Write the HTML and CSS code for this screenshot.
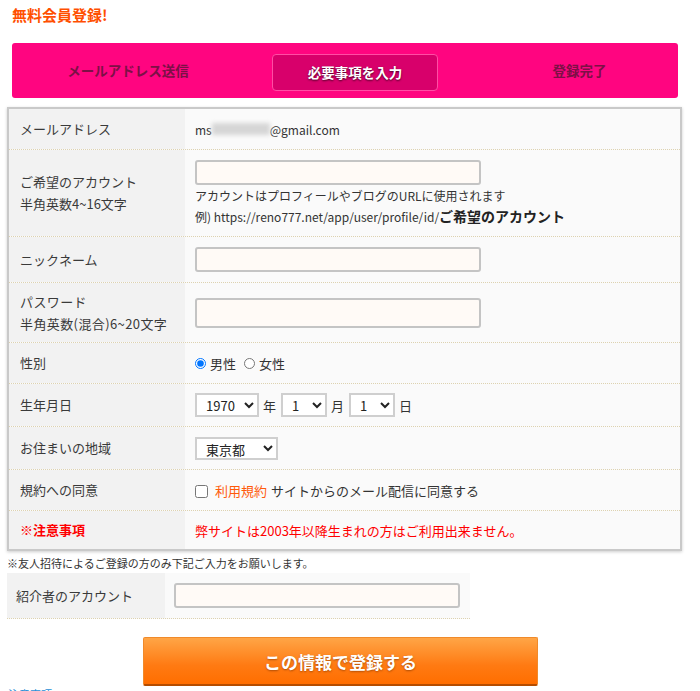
FILE: index.html
```html
<!DOCTYPE html>
<html lang="ja">
<head>
    <meta charset="UTF-8">
    <meta name="viewport" content="width=device-width, initial-scale=1.0">
    <title>無料会員登録</title>
    <link rel="stylesheet" href="styles.css">
</head>
<body>
    <h1 class="page-title">無料会員登録!</h1>

    <div class="steps">
        <div class="step">メールアドレス送信</div>
        <div class="step"><span class="step-active">必要事項を入力</span></div>
        <div class="step step-last">登録完了</div>
    </div>

    <div class="form-box">
        <div class="row row-mail">
            <div class="label">メールアドレス</div>
            <div class="value">ms<span class="blurred"></span>@gmail.com</div>
        </div>
        <div class="row row-account">
            <div class="label">ご希望のアカウント<br>半角英数4~16文字</div>
            <div class="value value-stack">
                <input type="text" class="text-input">
                <p class="hint">アカウントはプロフィールやブログのURLに使用されます</p>
                <p class="hint">例) https://reno777.net/app/user/profile/id/<span class="hint-em">ご希望のアカウント</span></p>
            </div>
        </div>
        <div class="row row-nick">
            <div class="label">ニックネーム</div>
            <div class="value"><input type="text" class="text-input"></div>
        </div>
        <div class="row row-pass">
            <div class="label">パスワード<br>半角英数(混合)6~20文字</div>
            <div class="value"><input type="password" class="text-input text-input-tall"></div>
        </div>
        <div class="row row-gender">
            <div class="label">性別</div>
            <div class="value">
                <label class="choice"><input type="radio" name="sex" checked>男性</label>
                <label class="choice"><input type="radio" name="sex">女性</label>
            </div>
        </div>
        <div class="row row-birth">
            <div class="label">生年月日</div>
            <div class="value">
                <select class="sel sel-year"><option>1970</option></select>
                <span class="unit">年</span>
                <select class="sel sel-day"><option>1</option></select>
                <span class="unit">月</span>
                <select class="sel sel-day"><option>1</option></select>
                <span class="unit">日</span>
            </div>
        </div>
        <div class="row row-area">
            <div class="label">お住まいの地域</div>
            <div class="value">
                <select class="sel sel-area"><option>東京都</option></select>
            </div>
        </div>
        <div class="row row-agree">
            <div class="label">規約への同意</div>
            <div class="value">
                <label class="agree"><input type="checkbox"> <a href="#" class="terms">利用規約</a> サイトからのメール配信に同意する</label>
            </div>
        </div>
        <div class="row row-notice">
            <div class="label label-alert">※注意事項</div>
            <div class="value value-alert">弊サイトは2003年以降生まれの方はご利用出来ません。</div>
        </div>
    </div>

    <p class="invite-note">※友人招待によるご登録の方のみ下記ご入力をお願いします。</p>

    <div class="invite-box">
        <div class="invite-label">紹介者のアカウント</div>
        <div class="invite-value"><input type="text" class="text-input"></div>
    </div>

    <button class="submit-btn">この情報で登録する</button>

    <a href="#" class="foot-link">注意事項</a>
</body>
</html>
```

FILE: styles.css
```css
* {
    box-sizing: border-box;
    margin: 0;
    padding: 0;
}

body {
    width: 700px;
    padding-top: 5px;
    font-family: "Noto Sans CJK JP", "Noto Sans", sans-serif;
    color: #333;
    background: #fff;
    overflow: hidden;
}

.page-title {
    margin-left: 12px;
    font-size: 15px;
    line-height: 20px;
    font-weight: bold;
    color: #ff4f00;
}

/* step bar */
.steps {
    display: grid;
    grid-template-columns: 226px 226px 1fr;
    align-items: start;
    width: 666px;
    height: 55px;
    margin: 18px 0 0 12px;
    padding: 11px 0 7px 3px;
    background: #ff0580;
    border-radius: 3px;
}

.step {
    height: 37px;
    line-height: 33px;
    text-align: center;
    font-size: 13.5px;
    font-weight: bold;
    color: #7c1046;
}

.step-last {
    padding-left: 14px;
}

.step-active {
    display: block;
    height: 37px;
    margin: 0 29px 0 31px;
    line-height: 34px;
    color: #fff;
    background: #d8006b;
    border: 1px solid #ff4da4;
    border-radius: 4px;
    text-shadow: 0 1px 2px rgba(0, 0, 0, 0.7);
}

/* form table */
.form-box {
    width: 675px;
    margin: 9px 0 0 7px;
    border: 2px solid #c9c9c9;
    box-shadow: 0 1px 3px rgba(0, 0, 0, 0.2);
    background: #fafafa;
}

.row {
    display: grid;
    grid-template-columns: 176px 1fr;
    height: 41px;
    border-bottom: 1px dotted #ddd2b0;
}

.row:last-child {
    border-bottom: none;
    height: 38px;
}

.row-account { height: 87px; }
.row-nick { height: 46px; }
.row-pass { height: 60px; }
.row-birth, .row-area { height: 43px; }

.label {
    display: flex;
    align-items: center;
    padding-left: 11px;
    background: #f2f2f2;
    font-size: 13px;
    line-height: 22px;
    color: #3a3a3a;
}

.row-pass .label {
    letter-spacing: 0.4px;
}

.value {
    display: flex;
    align-items: center;
    padding-left: 10px;
    font-size: 13px;
    color: #333;
}

.row-mail .value {
    font-size: 12px;
}

.blurred {
    display: inline-block;
    width: 58px;
    height: 12px;
    background: #d6d6d6;
    filter: blur(2px);
}

.value-stack {
    flex-direction: column;
    align-items: flex-start;
    justify-content: flex-start;
    padding-top: 10px;
}

.hint {
    font-size: 12px;
    line-height: 21px;
    color: #333;
}

.hint-em {
    font-size: 14px;
    font-weight: bold;
    color: #222;
}

.text-input {
    width: 286px;
    height: 25px;
    background: #fffaf6;
    border: 2px solid #c4c4c4;
    border-radius: 3px;
}

.text-input-tall {
    height: 30px;
}

.choice {
    display: flex;
    align-items: center;
    gap: 4px;
    margin-right: 8px;
}

.choice input {
    width: 11px;
    height: 11px;
    margin: 0;
}

.sel {
    height: 24px;
    padding-left: 5px;
    font-family: inherit;
    font-size: 13px;
    color: #222;
    background: #fff;
    border: 2px solid #cfcfcf;
}

.sel-year { width: 64px; }
.sel-day { width: 46px; }
.sel-area { width: 83px; height: 23px; }

.unit {
    margin: 0 5px 0 4px;
}

.agree {
    display: flex;
    align-items: center;
    gap: 4px;
}

.agree input {
    width: 13px;
    height: 13px;
    margin: 2px 3px 0 0;
}

.terms {
    color: #ff5a0a;
    text-decoration: none;
}

.label-alert {
    color: #f00;
    font-weight: bold;
}

.value-alert {
    color: #f00;
}

.invite-note {
    margin: 4px 0 0 7px;
    font-size: 11px;
    line-height: 16px;
    color: #333;
}

.invite-box {
    display: grid;
    grid-template-columns: 158px 1fr;
    width: 463px;
    height: 46px;
    margin: 2px 0 0 7px;
    border-bottom: 1px dotted #ddd2b0;
    background: #fafafa;
}

.invite-label {
    display: flex;
    align-items: center;
    padding-left: 9px;
    background: #f2f2f2;
    font-size: 13px;
    color: #3a3a3a;
}

.invite-value {
    display: flex;
    align-items: center;
    padding-left: 9px;
}

.submit-btn {
    display: block;
    width: 395px;
    height: 49px;
    margin: 18px 0 0 143px;
    font-family: inherit;
    font-size: 17px;
    font-weight: bold;
    color: #fff;
    text-shadow: 0 1px 2px rgba(120, 50, 0, 0.6);
    background: linear-gradient(#ffa546, #ff7a12 60%, #ff6e00);
    border: 1px solid #f08a2a;
    border-bottom: 2px solid #b54d00;
    border-radius: 2px;
}

.foot-link {
    display: block;
    margin: 0 0 0 8px;
    font-size: 11px;
    line-height: 16px;
    color: #2a8fd6;
    text-decoration: none;
}
```
